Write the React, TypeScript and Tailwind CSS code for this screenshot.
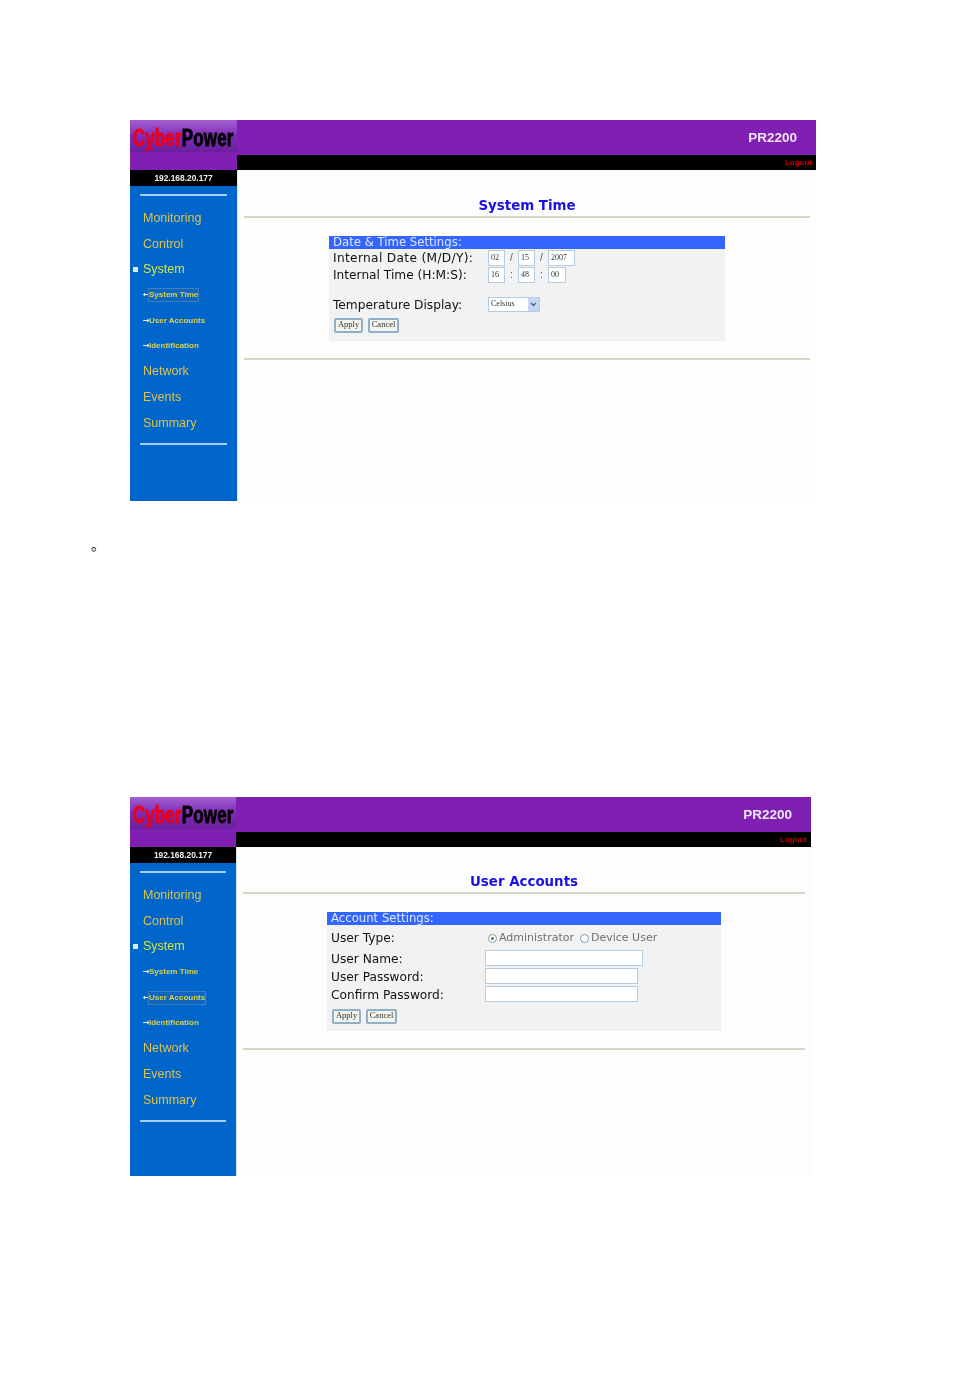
import type { ReactNode } from 'react';

const menuTop = ['Monitoring', 'Control'];
const menuBottom = ['Network', 'Events', 'Summary'];
const subItems = ['System Time', 'User Accounts', 'Identification'];

function NavItem({ label, active }: { label: string; active?: boolean }) {
  return (
    <div className="relative flex h-[25.6px] items-center pl-[13px]">
      {active && <span className="absolute left-[3px] top-[10px] h-[5px] w-[5px] bg-[#dce8ff]" />}
      <span className={`text-[12.5px] ${active ? 'text-[#d4e63c]' : 'text-[#dcc24a]'}`}>{label}</span>
    </div>
  );
}

function Sidebar({ current, w }: { current: string; w: string }) {
  return (
    <div className={`flex shrink-0 flex-col ${w}`}>
      <div className="flex h-[16px] items-center justify-center bg-black text-[8.4px] font-bold text-[#f0f0f0]">
        192.168.20.177
      </div>
      <div className="flex flex-1 flex-col bg-[#0066cc] pt-[8px]">
        <div className="mx-[10px] h-[2px] bg-[#a8cdf2]" />
        <div className="mt-[9.5px]">
          {menuTop.map((m) => (
            <NavItem key={m} label={m} />
          ))}
          <NavItem label="System" active />
          {subItems.map((s) => (
            <div key={s} className="flex h-[25.6px] items-center pl-[13px]">
              <span className="w-[6px] text-[8px] font-bold leading-none text-[#f0f0f0] [font-family:'DejaVu_Sans',sans-serif]">
                {s === current ? '←' : '→'}
              </span>
              <span
                className={`text-[8px] font-bold text-[#dcd040] ${s === current ? 'bg-[#0f66c0] outline outline-1 outline-[#3f7fc0]' : ''}`}
              >
                {s}
              </span>
            </div>
          ))}
          {menuBottom.map((m) => (
            <NavItem key={m} label={m} />
          ))}
        </div>
        <div className="mx-[10px] mt-[7.5px] h-[2px] bg-[#a8cdf2]" />
      </div>
    </div>
  );
}

function Frame(props: {
  frame: string;
  side: string;
  panel: string;
  titleBox: string;
  current: string;
  heading: string;
  children: ReactNode;
}) {
  return (
    <div className={`ml-[130px] flex flex-col blur-[0.55px] ${props.frame}`}>
      <div className="flex h-[35px] items-stretch bg-[#7f20b2]">
        <div
          className={`flex h-[32px] shrink-0 items-center justify-center bg-gradient-to-b from-[#a45fd0] via-[#7f2ab8] to-[#6a1f9c] pt-[4px] ${props.side}`}
        >
          <span className="origin-center scale-x-[0.74] whitespace-nowrap text-[23px] font-bold leading-none tracking-[0.2px] text-black [-webkit-text-stroke:0.8px_black]">
            <span className="text-[#e8001c] [-webkit-text-stroke:0.8px_#e8001c]">Cyber</span>Power
          </span>
        </div>
        <div className="flex flex-1 items-center justify-end pr-[19px] pt-[1px] text-[13.5px] font-bold text-[#efe4f5]">
          PR2200
        </div>
      </div>
      <div className="flex h-[15px]">
        <div className={`shrink-0 bg-[#7f20b2] ${props.side}`} />
        <div className="flex flex-1 items-center justify-end bg-black pr-[4px] text-[8px] font-bold text-[#c80000]">
          Logout
        </div>
      </div>
      <div className="flex flex-1">
        <Sidebar current={props.current} w={props.side} />
        <div className="flex flex-1 flex-col items-center border-l border-[#dbe8f5] bg-[#fdfdfd] px-[6px]">
          <div className={`flex w-full items-center justify-center border-b-2 border-[#d8d4c8] ${props.titleBox}`}>
            <span className="text-[13.4px] font-bold text-[#1a10e8] [font-family:'DejaVu_Sans',sans-serif]">
              {props.heading}
            </span>
          </div>
          <div className={`mt-[18px] flex flex-col bg-[#f2f2f2] ${props.panel}`}>{props.children}</div>
          <div className="mt-[17px] h-[2px] w-full bg-[#d8d4c8]" />
        </div>
      </div>
    </div>
  );
}

function PanelHead({ children }: { children: ReactNode }) {
  return (
    <div className="flex h-[13px] items-center bg-[#3366ff] pl-[4px] pt-[1px] text-[11.7px] text-[#dfe6ff] [font-family:'DejaVu_Sans',sans-serif]">
      {children}
    </div>
  );
}

function Label({ children, wide }: { children: ReactNode; wide?: boolean }) {
  return (
    <span
      className={`block pt-[2px] text-[12.2px] text-[#111111] [font-family:'DejaVu_Sans',sans-serif] ${wide ? 'tracking-[0.33px]' : ''}`}
    >
      {children}
    </span>
  );
}

function Field({ value, w }: { value: string; w: string }) {
  return (
    <div
      className={`flex h-[16px] items-center border border-[#b4cbe0] bg-white pl-[2px] text-[8px] text-[#333333] [font-family:'Liberation_Serif',serif] ${w}`}
    >
      {value}
    </div>
  );
}

function Sep({ ch, w }: { ch: string; w: string }) {
  return <span className={`text-center text-[10px] text-[#555555] ${w}`}>{ch}</span>;
}

function Buttons({ className }: { className: string }) {
  const base =
    "flex h-[15px] items-center justify-center rounded-[2px] border-2 border-[#8fb0c8] bg-[#f4f4ee] pb-[2px] text-[8.5px] text-[#333333] [font-family:'Liberation_Serif',serif]";
  return (
    <div className={`flex gap-[5px] ${className}`}>
      <div className={`${base} w-[29px]`}>Apply</div>
      <div className={`${base} w-[31px]`}>Cancel</div>
    </div>
  );
}

function Radio({ on }: { on?: boolean }) {
  return (
    <span className="flex h-[9px] w-[9px] items-center justify-center rounded-full border border-[#7f9db9] bg-white">
      {on && <span className="h-[3px] w-[3px] rounded-full bg-[#2f8f3f]" />}
    </span>
  );
}

export default function App() {
  return (
    <div className="min-h-[1395px] bg-white pt-[120px] [font-family:'Liberation_Sans',sans-serif]">
      <Frame
        frame="h-[381px] w-[686px]"
        side="w-[107px]"
        panel="h-[105px] w-[396px]"
        titleBox="h-[48px] pt-[27px]"
        current="System Time"
        heading="System Time"
      >
        <PanelHead>Date &amp; Time Settings:</PanelHead>
        <div className="flex h-[17px] items-center pl-[4px]">
          <div className="w-[155px]">
            <Label wide>Internal Date (M/D/Y):</Label>
          </div>
          <Field value="02" w="w-[17px]" />
          <Sep ch="/" w="w-[13px]" />
          <Field value="15" w="w-[17px]" />
          <Sep ch="/" w="w-[13px]" />
          <Field value="2007" w="w-[27px]" />
        </div>
        <div className="flex h-[17px] items-center pl-[4px]">
          <div className="w-[155px]">
            <Label>Internal Time (H:M:S):</Label>
          </div>
          <Field value="16" w="w-[17px]" />
          <Sep ch=":" w="w-[13px]" />
          <Field value="48" w="w-[17px]" />
          <Sep ch=":" w="w-[13px]" />
          <Field value="00" w="w-[18px]" />
        </div>
        <div className="mt-[12px] flex h-[18px] items-center pl-[4px]">
          <div className="w-[155px]">
            <Label>Temperature Display:</Label>
          </div>
          <div className="flex h-[15px] w-[52px] items-center justify-between border border-[#b4cbe0] bg-white pl-[2px] text-[8px] text-[#333333] [font-family:'Liberation_Serif',serif]">
            Celsius
            <span className="flex h-full w-[11px] items-center justify-center bg-[#c4d8f4]">
              <svg width="7" height="5" viewBox="0 0 7 5">
                <path d="M1 1l2.5 2.5L6 1" fill="none" stroke="#4d6185" strokeWidth="1.4" />
              </svg>
            </span>
          </div>
        </div>
        <Buttons className="ml-[5px] mt-[5px]" />
      </Frame>

      <div className="mt-[33px] h-[20px] pl-[91px] text-[14px] leading-[20px] text-black [font-family:'Noto_Sans_CJK_SC',sans-serif]">
        。
      </div>

      <div className="mt-[243px]">
        <Frame
          frame="h-[379px] w-[681px]"
          side="w-[106px]"
          panel="h-[119px] w-[394px]"
          titleBox="h-[47px] pt-[26px]"
          current="User Accounts"
          heading="User Accounts"
        >
          <PanelHead>Account Settings:</PanelHead>
          <div className="mt-[3px] flex h-[18px] items-center pl-[4px]">
            <div className="w-[156px]">
              <Label>User Type:</Label>
            </div>
            <div className="flex items-center pt-[2px] text-[11px] text-[#707070] [font-family:'DejaVu_Sans',sans-serif]">
              <span className="ml-[1px] mr-[2px]">
                <Radio on />
              </span>
              Administrator
              <span className="ml-[6px] mr-[2px]">
                <Radio />
              </span>
              Device User
            </div>
          </div>
          <div className="mt-[4px] flex h-[16px] items-center pl-[4px]">
            <div className="w-[154px]">
              <Label>User Name:</Label>
            </div>
            <Field value="" w="w-[158px]" />
          </div>
          <div className="mt-[1px] flex h-[18px] items-center pl-[4px]">
            <div className="w-[154px]">
              <Label>User Password:</Label>
            </div>
            <Field value="" w="w-[153px]" />
          </div>
          <div className="flex h-[18px] items-center pl-[4px]">
            <div className="w-[154px]">
              <Label>Confirm Password:</Label>
            </div>
            <Field value="" w="w-[153px]" />
          </div>
          <Buttons className="ml-[5px] mt-[6px]" />
        </Frame>
      </div>
    </div>
  );
}
